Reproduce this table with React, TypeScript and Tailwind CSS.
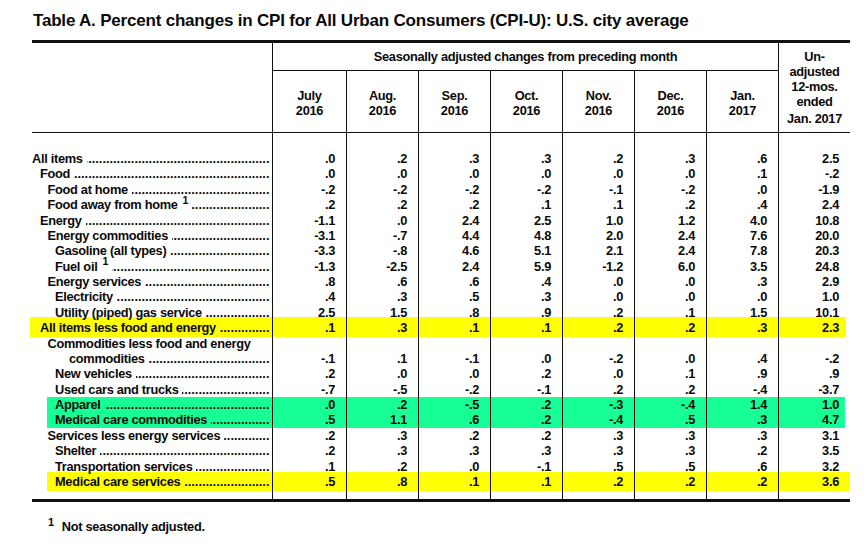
import React from "react";

type Row = {
  label: string;
  indent: 0 | 1 | 2 | 3 | 4;
  vals?: string[];
  sup?: boolean;
  dots?: boolean;
};

const indentCls: Record<number, string> = {
  0: "pl-0",
  1: "pl-[8px]",
  2: "pl-[15.5px]",
  3: "pl-[23px]",
  4: "pl-[37px]",
};

const GRID = "grid grid-cols-[240px_74px_72px_72px_72px_72px_72px_72px_72px]";

const months: [string, string][] = [
  ["July", "2016"],
  ["Aug.", "2016"],
  ["Sep.", "2016"],
  ["Oct.", "2016"],
  ["Nov.", "2016"],
  ["Dec.", "2016"],
  ["Jan.", "2017"],
];

const r = (label: string, indent: Row["indent"], v: string, sup = false): Row => ({
  label,
  indent,
  vals: v.split(" "),
  sup,
  dots: true,
});

const group1: Row[] = [
  r("All items", 0, ".0 .2 .3 .3 .2 .3 .6 2.5"),
  r("Food", 1, ".0 .0 .0 .0 .0 .0 .1 -.2"),
  r("Food at home", 2, "-.2 -.2 -.2 -.2 -.1 -.2 .0 -1.9"),
  r("Food away from home", 2, ".2 .2 .2 .1 .1 .2 .4 2.4", true),
  r("Energy", 1, "-1.1 .0 2.4 2.5 1.0 1.2 4.0 10.8"),
  r("Energy commodities", 2, "-3.1 -.7 4.4 4.8 2.0 2.4 7.6 20.0"),
  r("Gasoline (all types)", 3, "-3.3 -.8 4.6 5.1 2.1 2.4 7.8 20.3"),
  r("Fuel oil", 3, "-1.3 -2.5 2.4 5.9 -1.2 6.0 3.5 24.8", true),
  r("Energy services", 2, ".8 .6 .6 .4 .0 .0 .3 2.9"),
  r("Electricity", 3, ".4 .3 .5 .3 .0 .0 .0 1.0"),
  r("Utility (piped) gas service", 3, "2.5 1.5 .8 .9 .2 .1 1.5 10.1"),
];

const allLess = r("All items less food and energy", 1, ".1 .3 .1 .1 .2 .2 .3 2.3");

const group2: Row[] = [
  { label: "Commodities less food and energy", indent: 2, dots: false },
  r("commodities", 4, "-.1 .1 -.1 .0 -.2 .0 .4 -.2"),
  r("New vehicles", 3, ".2 .0 .0 .2 .0 .1 .9 .9"),
  r("Used cars and trucks", 3, "-.7 -.5 -.2 -.1 .2 .2 -.4 -3.7"),
];

const greenRows: Row[] = [
  r("Apparel", 3, ".0 .2 -.5 .2 -.3 -.4 1.4 1.0"),
  r("Medical care commodities", 3, ".5 1.1 .6 .2 -.4 .5 .3 4.7"),
];

const group3: Row[] = [
  r("Services less energy services", 2, ".2 .3 .2 .2 .3 .3 .3 3.1"),
  r("Shelter", 3, ".2 .3 .3 .3 .3 .3 .2 3.5"),
  r("Transportation services", 3, ".1 .2 .0 -.1 .5 .5 .6 3.2"),
];

const medServ = r("Medical care services", 3, ".5 .8 .1 .1 .2 .2 .2 3.6");

const DOTS = ".".repeat(90);

function DataRow({ row, extra = "" }: { row: Row; extra?: string }) {
  const vals = row.vals ?? ["", "", "", "", "", "", "", ""];
  return (
    <div className={`${GRID} leading-[15.38px] ${extra}`}>
      <div className={`flex min-w-0 items-baseline pr-[2.5px] ${indentCls[row.indent]}`}>
        <span className="shrink-0 whitespace-nowrap">
          {row.label}
          {row.sup && <sup className="ml-[5px] text-[10.5px]">1</sup>}
        </span>
        {row.dots && (
          <span className="ml-[4px] flex min-w-0 flex-1 justify-end overflow-hidden tracking-[0px]">
            <span className="shrink-0 whitespace-nowrap">{DOTS}</span>
          </span>
        )}
      </div>
      {vals.map((v, i) => (
        <div key={i} className="border-l border-[#111] pr-[11px] text-right">
          {v}
        </div>
      ))}
    </div>
  );
}

function Spacer({ h }: { h: string }) {
  return (
    <div className={`${GRID} ${h}`}>
      <div />
      {Array.from({ length: 8 }).map((_, i) => (
        <div key={i} className="border-l border-[#111]" />
      ))}
    </div>
  );
}

export default function App() {
  return (
    <div className="h-[551px] w-[864px] overflow-hidden bg-white font-['Liberation_Sans',Arial,sans-serif] text-[12.8px] font-bold tracking-[-0.3px] text-[#0a0a0a]">
      <h1 className="pl-[33px] pt-[10.5px] text-[17px] leading-[20px] tracking-[-0.2px]">
        Table A. Percent changes in CPI for All Urban Consumers (CPI-U): U.S. city average
      </h1>

      <div className="ml-[32px] mt-[9.5px] w-[818px] border-t-[3px] border-[#111]">
        {/* header */}
        <div className={`${GRID} grid-rows-[28px_61px] border-b border-[#111] leading-[15px]`}>
          <div className="row-span-2" />
          <div className="col-span-7 flex items-center justify-center border-b border-l border-[#111]">
            Seasonally adjusted changes from preceding month
          </div>
          <div className="row-span-2 flex flex-col items-center justify-center border-l border-[#111] text-center">
            <span>Un-</span>
            <span>adjusted</span>
            <span>12-mos.</span>
            <span>ended</span>
            <span className="mt-[2px]">Jan. 2017</span>
          </div>
          {months.map(([m, y]) => (
            <div
              key={m}
              className="flex flex-col items-center justify-center border-l border-[#111] pt-[3px] text-center"
            >
              <span>{m}</span>
              <span>{y}</span>
            </div>
          ))}
        </div>

        {/* body */}
        <div className="border-b-[3px] border-[#111]">
          <Spacer h="h-[18px]" />
          {group1.map((row) => (
            <DataRow key={row.label} row={row} />
          ))}
          <div className="-mb-[1px] -ml-[2px] -mt-[3px] mr-[4px] bg-[#ffff00] pb-[1px] pt-[3px]">
            <div className="-mr-[4px] ml-[2px]">
              <DataRow row={allLess} />
            </div>
          </div>
          {group2.map((row) => (
            <DataRow key={row.label} row={row} />
          ))}
          <div className="ml-[15px] mr-[5px] bg-[#17ff94]">
            <div className="-ml-[15px] -mr-[5px]">
              {greenRows.map((row) => (
                <DataRow key={row.label} row={row} />
              ))}
            </div>
          </div>
          {group3.map((row) => (
            <DataRow key={row.label} row={row} />
          ))}
          <div className="-my-[2px] ml-[15px] bg-[#ffff00] py-[2px]">
            <div className="-ml-[15px]">
              <DataRow row={medServ} />
            </div>
          </div>
          <Spacer h="h-[10px]" />
        </div>
      </div>

      <div className="mt-[17px] flex items-baseline pl-[48px] leading-[15px]">
        <sup className="text-[11px]">1</sup>
        <span className="ml-[8px]">Not seasonally adjusted.</span>
      </div>
    </div>
  );
}
